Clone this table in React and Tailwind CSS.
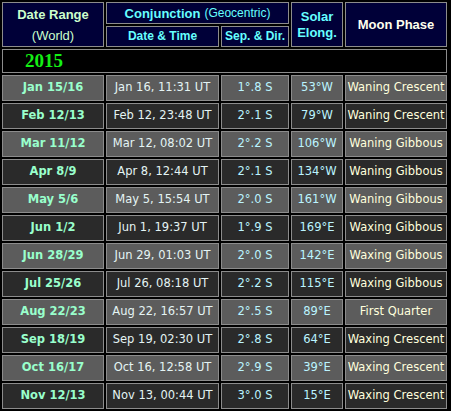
import React from "react";

const rows = [
  ["Jan 15/16", "Jan 16, 11:31 UT", "1°.8 S", "53°W", "Waning Crescent"],
  ["Feb 12/13", "Feb 12, 23:48 UT", "2°.1 S", "79°W", "Waning Crescent"],
  ["Mar 11/12", "Mar 12, 08:02 UT", "2°.2 S", "106°W", "Waning Gibbous"],
  ["Apr 8/9", "Apr 8, 12:44 UT", "2°.1 S", "134°W", "Waning Gibbous"],
  ["May 5/6", "May 5, 15:54 UT", "2°.0 S", "161°W", "Waning Gibbous"],
  ["Jun 1/2", "Jun 1, 19:37 UT", "1°.9 S", "169°E", "Waxing Gibbous"],
  ["Jun 28/29", "Jun 29, 01:03 UT", "2°.0 S", "142°E", "Waxing Gibbous"],
  ["Jul 25/26", "Jul 26, 08:18 UT", "2°.2 S", "115°E", "Waxing Gibbous"],
  ["Aug 22/23", "Aug 22, 16:57 UT", "2°.5 S", "89°E", "First Quarter"],
  ["Sep 18/19", "Sep 19, 02:30 UT", "2°.8 S", "64°E", "Waxing Crescent"],
  ["Oct 16/17", "Oct 16, 12:58 UT", "2°.9 S", "39°E", "Waxing Crescent"],
  ["Nov 12/13", "Nov 13, 00:44 UT", "3°.0 S", "15°E", "Waxing Crescent"],
];

const head = "bg-[#000038] border border-[#8c8c8c] flex flex-col items-center justify-center font-['Liberation_Sans',Arial,sans-serif] leading-[15px]";
const cell = "border border-[#8c8c8c] flex items-center justify-center font-['DejaVu_Sans',Verdana,sans-serif] text-[11.5px] whitespace-nowrap";

export default function App() {
  return (
    <div className="w-[451px] h-[411px] bg-black pl-[2px] pt-[2px] overflow-hidden">
      <div className="grid grid-cols-[102px_113px_68px_52px_102px] grid-rows-[22px_21px_24px_repeat(12,26px)] gap-[2px]">
        {/* header */}
        <div className={`${head} row-span-2 text-[#ccffcc] text-[13px]`}>
          <span className="font-bold">Date Range</span>
          <span className="mt-[6px]">(World)</span>
        </div>
        <div className={`${head} col-span-2 flex-row text-[#66ffff]`}>
          <span className="font-bold text-[13px]">Conjunction</span>
          <span className="text-[12px] ml-[4px]">(Geocentric)</span>
        </div>
        <div className={`${head} row-span-2 text-[#66ffff] text-[13px] font-bold`}>
          <span>Solar</span>
          <span className="mt-[1px]">Elong.</span>
        </div>
        <div className={`${head} row-span-2 text-[#ffffee] text-[13px] font-bold`}>
          Moon Phase
        </div>
        <div className={`${head} text-[#66ffff] text-[12px] font-bold`}>Date &amp; Time</div>
        <div className={`${head} text-[#66ffff] text-[12px] font-bold`}>Sep. &amp; Dir.</div>

        {/* year */}
        <div className="col-span-5 border border-[#8c8c8c] bg-black flex items-center pl-[22px] font-['Liberation_Serif','Times_New_Roman',serif] font-bold text-[19px] text-[#14f014]">
          2015
        </div>

        {rows.map((r, i) => {
          const bg = i % 2 === 0 ? "bg-[#5c5c5c]" : "bg-[#2a2a2a]";
          return (
            <React.Fragment key={r[0]}>
              <div className={`${cell} ${bg} font-bold text-[#99ffcc]`}>{r[0]}</div>
              <div className={`${cell} ${bg} text-[#e4f4f4]`}>{r[1]}</div>
              <div className={`${cell} ${bg} text-[#bbf4ff]`}>{r[2]}</div>
              <div className={`${cell} ${bg} text-[#bbf4ff]`}>{r[3]}</div>
              <div className={`${cell} ${bg} text-[#ffffdd]`}>{r[4]}</div>
            </React.Fragment>
          );
        })}
      </div>
    </div>
  );
}
